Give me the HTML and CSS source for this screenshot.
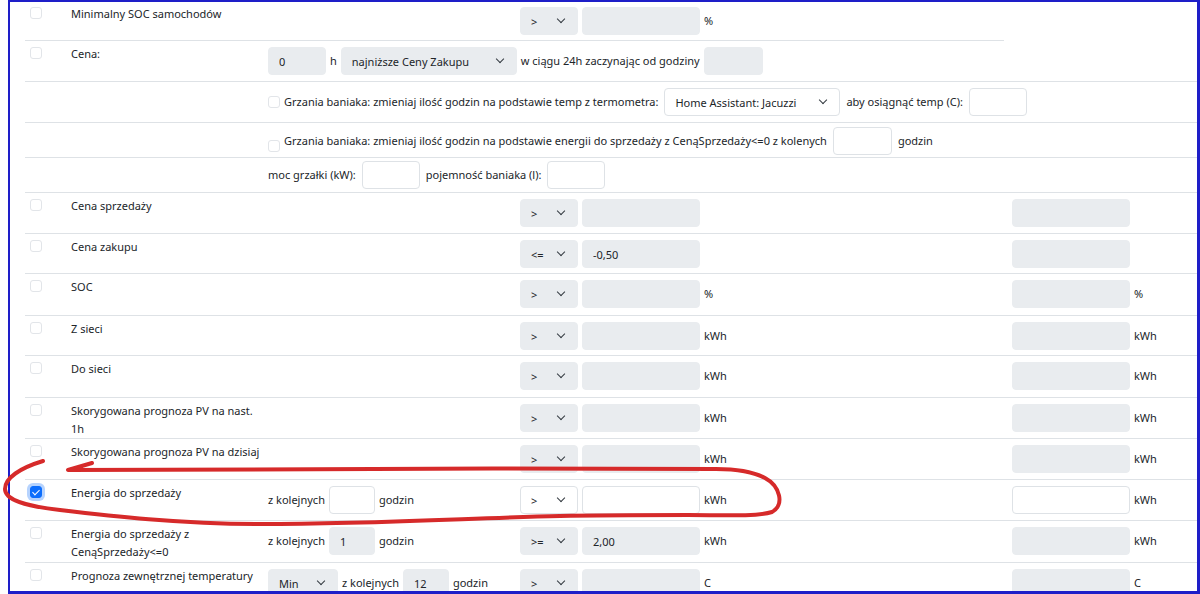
FILE: index.html
```html
<!DOCTYPE html>
<html lang="pl">
<head>
    <meta charset="UTF-8">
    <meta name="viewport" content="width=device-width, initial-scale=1.0">
    <title>Warunki</title>
    <link rel="stylesheet" href="styles.css">
</head>
<body>

<div class="frame">
    <table class="rules">
        <colgroup>
            <col class="c-check"><col class="c-name"><col class="c-extra"><col class="c-cond"><col class="c-cond2">
        </colgroup>

        <tr class="row-first">
            <td class="check"><input type="checkbox"></td>
            <td class="name">Minimalny SOC samochodów</td>
            <td></td>
            <td><div class="ctl"><span class="sel op"><select disabled><option>&gt;</option></select></span><input class="val" disabled><span>%</span></div></td>
            <td class="no-line"></td>
        </tr>

        <tr>
            <td class="check"><input type="checkbox"></td>
            <td class="name">Cena:</td>
            <td colspan="3">
                <div class="ctl">
                    <input class="num" disabled value="0"><span>h</span>
                    <span class="sel wide"><select disabled><option>najniższe Ceny Zakupu</option></select></span>
                    <span>w ciągu 24h zaczynając od godziny</span>
                    <input class="num hour" disabled>
                </div>
            </td>
        </tr>

        <tr>
            <td></td>
            <td></td>
            <td colspan="3">
                <div class="ctl ctl-wide">
                    <input type="checkbox" class="mini">
                    <span>Grzania baniaka: zmieniaj ilość godzin na podstawie temp z termometra:</span>
                    <span class="sel wide open"><select><option>Home Assistant: Jacuzzi</option></select></span>
                    <span>aby osiągnąć temp (C):</span>
                    <input class="num open">
                </div>
            </td>
        </tr>

        <tr class="row-sub">
            <td></td>
            <td></td>
            <td colspan="3">
                <div class="ctl ctl-wide">
                    <input type="checkbox" class="mini low">
                    <span>Grzania baniaka: zmieniaj ilość godzin na podstawie energii do sprzedaży z CenąSprzedaży&lt;=0 z kolenych</span>
                    <input class="num hour open">
                    <span>godzin</span>
                </div>
            </td>
        </tr>

        <tr class="row-heater">
            <td></td>
            <td></td>
            <td colspan="3">
                <div class="ctl ctl-wide">
                    <span>moc grzałki (kW):</span>
                    <input class="num open">
                    <span>pojemność baniaka (l):</span>
                    <input class="num open">
                </div>
            </td>
        </tr>

        <tr>
            <td class="check"><input type="checkbox"></td>
            <td class="name">Cena sprzedaży</td>
            <td></td>
            <td><div class="ctl"><span class="sel op"><select disabled><option>&gt;</option></select></span><input class="val" disabled></div></td>
            <td><div class="ctl"><input class="val" disabled></div></td>
        </tr>

        <tr class="row-short">
            <td class="check"><input type="checkbox"></td>
            <td class="name">Cena zakupu</td>
            <td></td>
            <td><div class="ctl"><span class="sel op"><select disabled><option>&lt;=</option></select></span><input class="val" disabled value="-0,50"></div></td>
            <td><div class="ctl"><input class="val" disabled></div></td>
        </tr>

        <tr class="row-tall">
            <td class="check"><input type="checkbox"></td>
            <td class="name">SOC</td>
            <td></td>
            <td><div class="ctl"><span class="sel op"><select disabled><option>&gt;</option></select></span><input class="val" disabled><span>%</span></div></td>
            <td><div class="ctl"><input class="val" disabled><span>%</span></div></td>
        </tr>

        <tr class="row-short">
            <td class="check"><input type="checkbox"></td>
            <td class="name">Z sieci</td>
            <td></td>
            <td><div class="ctl"><span class="sel op"><select disabled><option>&gt;</option></select></span><input class="val" disabled><span>kWh</span></div></td>
            <td><div class="ctl"><input class="val" disabled><span>kWh</span></div></td>
        </tr>

        <tr class="row-tall">
            <td class="check"><input type="checkbox"></td>
            <td class="name">Do sieci</td>
            <td></td>
            <td><div class="ctl"><span class="sel op"><select disabled><option>&gt;</option></select></span><input class="val" disabled><span>kWh</span></div></td>
            <td><div class="ctl"><input class="val" disabled><span>kWh</span></div></td>
        </tr>

        <tr>
            <td class="check"><input type="checkbox"></td>
            <td class="name">Skorygowana prognoza PV na nast.<br>1h</td>
            <td></td>
            <td><div class="ctl"><span class="sel op"><select disabled><option>&gt;</option></select></span><input class="val" disabled><span>kWh</span></div></td>
            <td><div class="ctl"><input class="val" disabled><span>kWh</span></div></td>
        </tr>

        <tr>
            <td class="check"><input type="checkbox"></td>
            <td class="name">Skorygowana prognoza PV na dzisiaj</td>
            <td></td>
            <td><div class="ctl"><span class="sel op"><select disabled><option>&gt;</option></select></span><input class="val" disabled><span>kWh</span></div></td>
            <td><div class="ctl"><input class="val" disabled><span>kWh</span></div></td>
        </tr>

        <tr>
            <td class="check"><input type="checkbox" checked></td>
            <td class="name">Energia do sprzedaży</td>
            <td><div class="ctl"><span>z kolejnych</span><input class="num small open"><span>godzin</span></div></td>
            <td><div class="ctl"><span class="sel op open"><select><option>&gt;</option></select></span><input class="val open"><span>kWh</span></div></td>
            <td><div class="ctl"><input class="val open"><span>kWh</span></div></td>
        </tr>

        <tr class="row-tall">
            <td class="check"><input type="checkbox"></td>
            <td class="name">Energia do sprzedaży z<br>CenąSprzedaży&lt;=0</td>
            <td><div class="ctl"><span>z kolejnych</span><input class="num small" disabled value="1"><span>godzin</span></div></td>
            <td><div class="ctl"><span class="sel op"><select disabled><option>&gt;=</option></select></span><input class="val" disabled value="2,00"><span>kWh</span></div></td>
            <td><div class="ctl"><input class="val" disabled><span>kWh</span></div></td>
        </tr>

        <tr>
            <td class="check"><input type="checkbox"></td>
            <td class="name">Prognoza zewnętrznej temperatury</td>
            <td><div class="ctl"><span class="sel agg"><select disabled><option>Min</option></select></span><span>z kolejnych</span><input class="num small" disabled value="12"><span>godzin</span></div></td>
            <td><div class="ctl"><span class="sel op"><select disabled><option>&gt;</option></select></span><input class="val" disabled><span>C</span></div></td>
            <td><div class="ctl"><input class="val" disabled><span>C</span></div></td>
        </tr>
    </table>
</div>

<svg class="marker" width="1200" height="594" viewBox="0 0 1200 594">
    <path d="M92 463 L68 470 C250 469 500 468 716 469 C735 469 752 471 765 478 C780 486 785 505 772 512 C755 517 720 515 688 515 C640 515 600 515 560 516 C470 518 380 524 260 524 C180 524 110 516 60 510 C25 506 5 500 5 489 C5 478 20 468 43 461"
          fill="none" stroke="#d62a2a" stroke-width="4" stroke-linecap="round" stroke-linejoin="round"/>
</svg>

</body>
</html>
```

FILE: styles.css
```css
body {
    margin: 0;
    font-family: "Noto Sans", "Open Sans", sans-serif;
    font-size: 11px;
    color: #212529;
    background-color: #fff;
}

.frame {
    margin-left: 8px;
    height: 594px;
    border: 2px solid #1e1ec8;
    border-right-width: 3px;
    border-bottom-width: 3px;
    box-sizing: border-box;
    overflow: hidden;
}

.rules {
    margin-left: 15px;
    width: 1172px;
    border-collapse: collapse;
    table-layout: fixed;
}

.c-check { width: 38px; }
.c-name { width: 197px; }
.c-extra { width: 252px; }
.c-cond { width: 492px; }
.c-cond2 { width: 193px; }

td {
    padding: 6px 8px 6px 8px;
    border-bottom: 1px solid #dee2e6;
    vertical-align: top;
    line-height: 18px;
}

td.no-line {
    border-bottom: none;
}

.row-first td {
    padding-top: 5px;
    padding-bottom: 5px;
}

.row-short td {
    padding-bottom: 5px;
}

.row-tall td {
    padding-bottom: 7px;
}

.row-sub td {
    padding-top: 4px;
    padding-bottom: 2px;
}

.row-heater td {
    padding-top: 3px;
    padding-bottom: 3px;
}

td.check {
    padding-left: 5px;
    padding-right: 0;
}

td.name {
    padding-top: 4px;
    padding-right: 0;
    padding-bottom: 0;
    white-space: nowrap;
}

.row-first td.name {
    padding-top: 3px;
}

input[type="checkbox"] {
    appearance: none;
    display: block;
    width: 12px;
    height: 12px;
    margin: 0;
    border: 1px solid #e2e5e9;
    border-radius: 3px;
    background-color: #fff;
    box-sizing: border-box;
}

input[type="checkbox"]:checked {
    position: relative;
    border-color: #0d6efd;
    background-color: #0d6efd;
    box-shadow: 0 0 0 3px rgba(13, 110, 253, 0.3);
}

input[type="checkbox"]:checked::after {
    content: "";
    position: absolute;
    left: 3px;
    top: 1px;
    width: 3px;
    height: 6px;
    border-right: 1.5px solid #fff;
    border-bottom: 1.5px solid #fff;
    transform: rotate(45deg);
}

input.mini {
    margin-right: -2px;
}

input.mini.low {
    margin-top: 10px;
}

.ctl {
    display: flex;
    align-items: center;
    gap: 4px;
    height: 28px;
    white-space: nowrap;
}

.ctl-wide {
    gap: 6px;
}

.ctl input:not([type="checkbox"]),
.sel select {
    height: 28px;
    box-sizing: border-box;
    margin: 0;
    padding: 0 10px;
    font-family: inherit;
    font-size: 11px;
    color: #212529;
    background-color: #e9ecef;
    border: 1px solid #e9ecef;
    border-radius: 4px;
    outline: none;
}

.ctl input.open,
.sel.open select {
    background-color: #fff;
    border-color: #dee2e6;
}

.val {
    width: 118px;
}

.num {
    width: 58px;
}

.num.hour {
    width: 59px;
}

.num.small {
    width: 46px;
}

.sel {
    position: relative;
    display: block;
}

.sel select {
    appearance: none;
    display: block;
    opacity: 1;
}

.sel::after {
    content: "";
    position: absolute;
    right: 14px;
    top: 50%;
    width: 5px;
    height: 5px;
    margin-top: -5px;
    border-right: 1.5px solid #343a40;
    border-bottom: 1.5px solid #343a40;
    transform: rotate(45deg);
}

.sel.op select {
    width: 58px;
}

.sel.wide select {
    width: 176px;
}

.sel.agg select {
    width: 70px;
}

.marker {
    position: absolute;
    left: 0;
    top: 0;
    pointer-events: none;
}
```
